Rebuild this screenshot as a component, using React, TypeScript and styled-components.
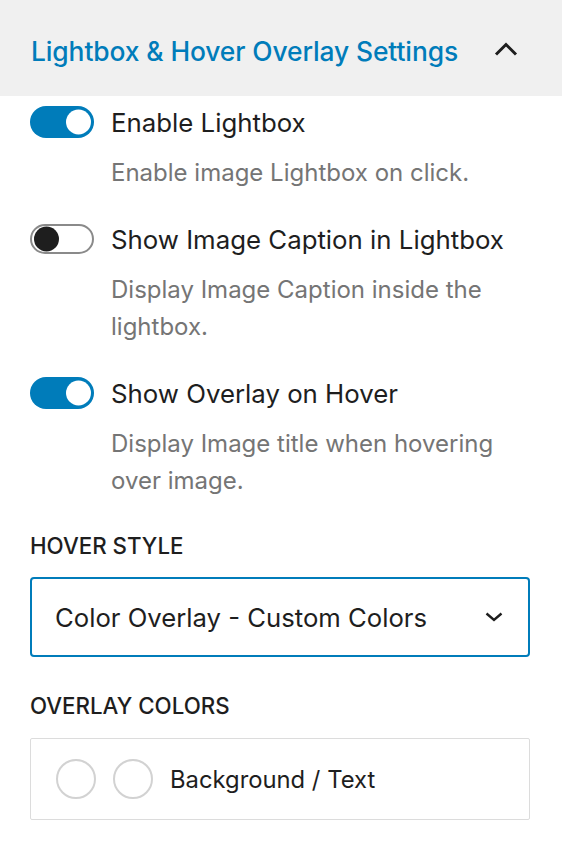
import React from "react";
import styled, { createGlobalStyle } from "styled-components";

const GlobalStyle = createGlobalStyle`
  html, body {
    margin: 0;
    padding: 0;
    background: #ffffff;
  }
  body {
    font-family: Inter, "Noto Sans", "Liberation Sans", sans-serif;
    color: #1e1e1e;
  }
  * {
    box-sizing: border-box;
  }
`;

const BLUE = "#007cba";

interface IToggleRowProps {
  label: string;
  help: string;
  checked: boolean;
}

const ToggleRow = (props: IToggleRowProps) => {
  const { label, help, checked } = props;
  return (
    <ToggleItem>
      <ToggleLine>
        <Track $on={checked}>
          <Thumb $on={checked} />
        </Track>
        <ToggleLabel>{label}</ToggleLabel>
      </ToggleLine>
      <Help>{help}</Help>
    </ToggleItem>
  );
};

const ChevronUp = () => (
  <svg width="24" height="14" viewBox="0 0 24 14" fill="none">
    <path
      d="M2 12.5 L12 2.5 L22 12.5"
      stroke="#1e1e1e"
      strokeWidth="3"
      strokeLinejoin="miter"
    />
  </svg>
);

const ChevronDown = () => (
  <svg width="18" height="10" viewBox="0 0 18 10" fill="none">
    <path d="M1.5 1.5 L9 8 L16.5 1.5" stroke="#1e1e1e" strokeWidth="2.4" />
  </svg>
);

export default function App() {
  return (
    <>
      <GlobalStyle />
      <Panel>
        <Header>
          <Title>Lightbox &amp; Hover Overlay Settings</Title>
          <ChevronUp />
        </Header>
        <Body>
          <ToggleRow
            label="Enable Lightbox"
            help="Enable image Lightbox on click."
            checked
          />
          <ToggleRow
            label="Show Image Caption in Lightbox"
            help="Display Image Caption inside the lightbox."
            checked={false}
          />
          <ToggleRow
            label="Show Overlay on Hover"
            help="Display Image title when hovering over image."
            checked
          />
          <FieldLabel>Hover Style</FieldLabel>
          <Select>
            <span>Color Overlay - Custom Colors</span>
            <ChevronDown />
          </Select>
          <FieldLabel $top={34}>Overlay Colors</FieldLabel>
          <ColorBox>
            <Swatch />
            <Swatch />
            <ColorText>Background / Text</ColorText>
          </ColorBox>
        </Body>
      </Panel>
    </>
  );
}

const Panel = styled.div`
  width: 562px;
  display: flex;
  flex-direction: column;
`;

const Header = styled.div`
  height: 96px;
  background: #f0f0f0;
  display: flex;
  align-items: center;
  justify-content: space-between;
  padding: 6px 44px 0 31px;

  svg {
    margin-top: -4px;
  }
`;

const Title = styled.h2`
  margin: 0;
  font-size: 26.4px;
  font-weight: 500;
  color: ${BLUE};
  letter-spacing: -0.1px;
`;

const Body = styled.div`
  display: flex;
  flex-direction: column;
  padding: 10px 32px 0 30px;
`;

const ToggleItem = styled.div`
  display: flex;
  flex-direction: column;
  margin-bottom: 32px;
`;

const ToggleLine = styled.div`
  display: flex;
  align-items: center;
  gap: 17px;
  height: 32px;
`;

const Track = styled.span<{ $on: boolean }>`
  flex: none;
  position: relative;
  width: 64px;
  height: ${(p) => (p.$on ? "32px" : "30px")};
  border-radius: 16px;
  background: ${(p) => (p.$on ? BLUE : "#ffffff")};
  border: ${(p) => (p.$on ? "none" : "2px solid #8a8a8a")};
`;

const Thumb = styled.span<{ $on: boolean }>`
  position: absolute;
  top: 50%;
  width: 25px;
  height: 25px;
  border-radius: 50%;
  transform: translateY(-50%);
  background: ${(p) => (p.$on ? "#ffffff" : "#1e1e1e")};
  left: ${(p) => (p.$on ? "36px" : "2px")};
`;

const ToggleLabel = styled.span`
  font-size: 25.8px;
  color: #1e1e1e;
`;

const Help = styled.p`
  margin: 16px 0 0 81px;
  font-size: 24px;
  line-height: 37px;
  color: #757575;
`;

const FieldLabel = styled.div<{ $top?: number }>`
  margin-top: ${(p) => (p.$top ? `${p.$top}px` : "0")};
  font-size: 22.3px;
  font-weight: 500;
  line-height: 30px;
  text-transform: uppercase;
  color: #1e1e1e;
`;

const Select = styled.div`
  margin-top: 16px;
  height: 80px;
  border: 2px solid ${BLUE};
  border-radius: 4px;
  display: flex;
  align-items: center;
  justify-content: space-between;
  padding: 0 25px 0 23px;
  font-size: 25.7px;
  color: #1e1e1e;
`;

const ColorBox = styled.div`
  margin-top: 17px;
  height: 82px;
  border: 1px solid #dcdcdc;
  border-radius: 2px;
  display: flex;
  align-items: center;
  padding: 0 0 0 25px;
`;

const Swatch = styled.span`
  width: 40px;
  height: 40px;
  border-radius: 50%;
  border: 2px solid #d2d2d2;
  margin-right: 17px;
`;

const ColorText = styled.span`
  font-size: 23.8px;
  color: #1e1e1e;
`;
